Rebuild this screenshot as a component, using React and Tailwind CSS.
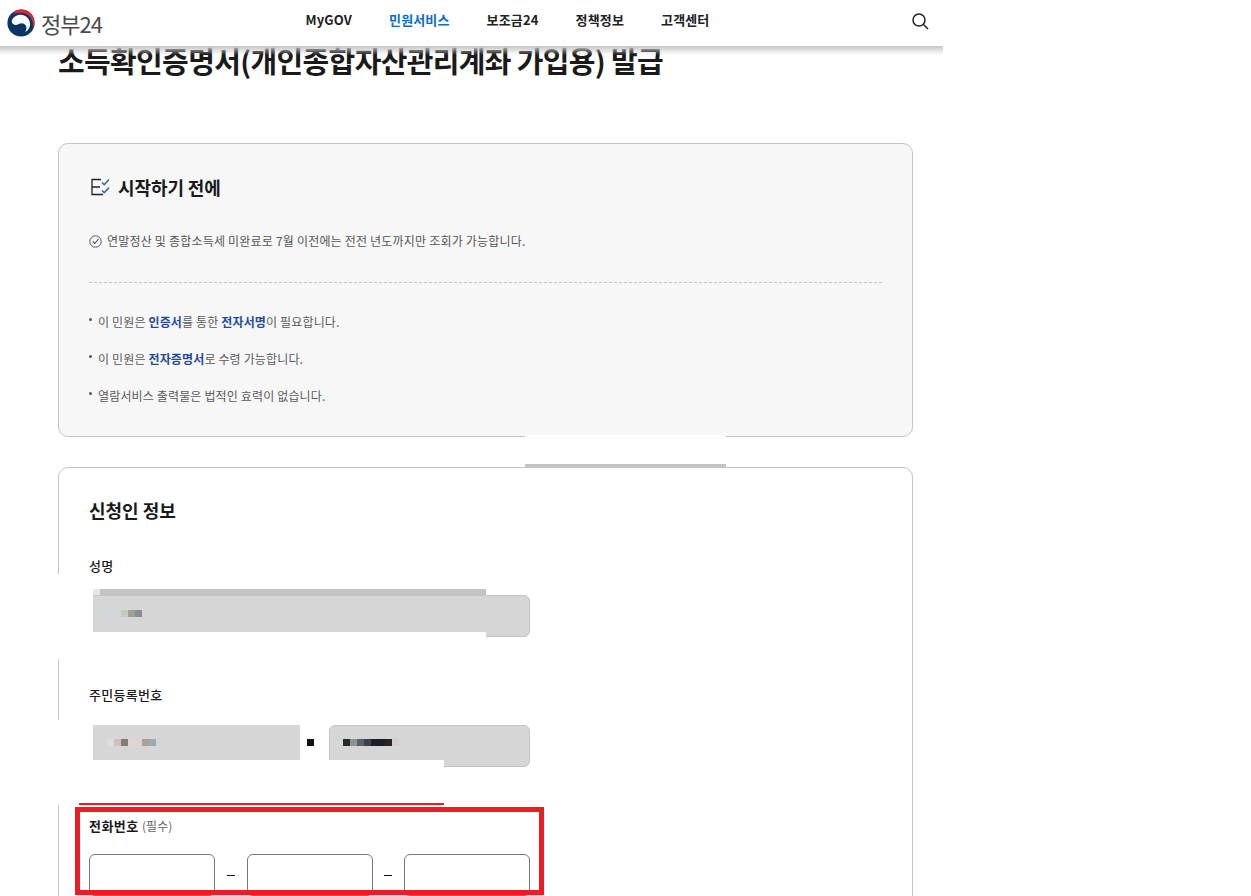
import React from "react";

const nameMosaic = ["bg-[#d3d8dc]", "bg-[#d2d8de]", "bg-[#d6d8d6]", "bg-[#c6c8c2]", "bg-[#a39d92]", "bg-[#87908f]"];
const idMosaic1 = ["bg-[#dcdde0]", "bg-[#d3bfc3]", "bg-[#7f7f78]", "bg-[#e0d5d0]", "bg-[#d9d6d0]", "bg-[#aba093]", "bg-[#9aabb4]", "bg-[#d2d7d8]"];
const idMosaic2 = ["bg-[#252b28]", "bg-[#918f95]", "bg-[#56636f]", "bg-[#38434c]", "bg-[#1c202a]", "bg-[#1c1f28]", "bg-[#2c2320]", "bg-[#d0d0d2]"];

function Logo() {
  return (
    <svg width="28" height="28" viewBox="0 0 28 28" fill="none">
      <circle cx="14" cy="14" r="13.6" fill="#0b3563" />
      <path d="M5 5C8 1.500 12 .2 16 .6c6 .6 11 5.400 11.400 11.600.2 3.300-.6 6-2 8.300.8-3 .9-6.200-.3-9C23.300 7 19 4 14.500 3.800 11 3.600 7.500 4.500 5 5z" fill="#cd2e3a" />
      <path d="M4.500 12.500C6 7.500 11 5 15.500 6c4.500 1 8 5 7.500 10-.4 3.500-2.500 6-5 7 1.500-2 2-4.500.8-6.500-1.500-2.500-4.800-3-7-1.500-2.200 1.300-5 1.200-6.300-.5-.6-.7-.7-1.300-.5-2z" fill="#ffffff" />
    </svg>
  );
}

function ChecklistIcon() {
  return (
    <svg width="21" height="20" viewBox="0 0 21 20" fill="none">
      <path d="M12 2.500H3v7.500h8M3 10v7.500h11" stroke="#222222" strokeWidth="1.300" />
      <path d="M13 5.500l2.200 2.200L20 2.500M13 13.500l2.200 2.200L20 10.500" stroke="#2b5fb0" strokeWidth="1.400" />
    </svg>
  );
}

function CheckCircle() {
  return (
    <svg width="13" height="13" viewBox="0 0 13 13" fill="none">
      <circle cx="6.500" cy="6.500" r="5.700" stroke="#555555" strokeWidth="1" />
      <path d="M3.800 6.500l2 2 3.700-4.500" stroke="#3f4f72" strokeWidth="1.100" />
    </svg>
  );
}

function SearchIcon() {
  return (
    <svg width="18" height="18" viewBox="0 0 18 18" fill="none">
      <circle cx="8" cy="8" r="6" stroke="#222222" strokeWidth="1.500" />
      <path d="M12.500 12.500L17 17" stroke="#222222" strokeWidth="1.500" />
    </svg>
  );
}

function Bullet({ children }) {
  return (
    <li className="flex items-start h-[17px] text-[12px] leading-[17px] tracking-[0.15px] text-[#5a5a5a]">
      <span className="mt-[5px] mr-[6px] w-[3px] h-[3px] rounded-full bg-[#555555]"></span>
      <span>{children}</span>
    </li>
  );
}

function Mosaic({ colors }) {
  return (
    <div className="flex">
      {colors.map((c, i) => (
        <div key={i} className={`w-[7px] h-[7px] ${c}`}></div>
      ))}
    </div>
  );
}

function PhoneInput() {
  return <input type="text" className="w-[126px] h-[42px] shrink-0 bg-white border border-[#767676] rounded-[6px]" />;
}

function Dash() {
  return <span className="w-[8px] h-px bg-[#111111] shrink-0"></span>;
}

export default function App() {
  return (
    <div className="relative w-[1251px] h-[896px] overflow-hidden bg-white font-['Noto_Sans_CJK_KR','Noto_Sans',sans-serif] text-[#1a1a1a]">
      <header className="absolute left-0 top-0 z-10 w-[943px] h-[46px] bg-white flex items-center">
        <div className="w-[270px] pl-[7px] flex items-center gap-[6px]">
          <Logo />
          <span className="text-[22px] leading-none text-[#4b4b4b] tracking-[-1px]">정부24</span>
        </div>
        <nav className="flex items-center gap-[37px] pl-[35.500px] -mt-[6px] text-[13px] font-bold tracking-[0.15px] text-[#222222]">
          <span>MyGOV</span>
          <span className="text-[#0b6bcb]">민원서비스</span>
          <span>보조금24</span>
          <span>정책정보</span>
          <span>고객센터</span>
        </nav>
        <div className="ml-auto mr-[14px] -mt-[4px]">
          <SearchIcon />
        </div>
      </header>
      <div className="absolute left-0 top-[46px] z-10 w-[943px] h-[9px] bg-gradient-to-b from-[#c6c6c6] to-transparent"></div>

      <main className="pl-[58px] w-[913px]">
        <h1 className="pt-[40px] h-[143px] text-[29px] leading-[40px] font-bold tracking-[-0.65px] text-[#1a1a1a]">
          소득확인증명서(개인종합자산관리계좌 가입용) 발급
        </h1>

        <section className="h-[294px] border border-[#c4c4c4] rounded-[10px] bg-[#f7f7f7] pt-[30px] px-[30px]">
          <div className="flex items-center gap-[8px] h-[26px]">
            <ChecklistIcon />
            <h2 className="text-[18px] font-bold tracking-[-0.1px]">시작하기 전에</h2>
          </div>
          <div className="flex items-center gap-[5px] mt-[32px] h-[18px] text-[12px] tracking-[0.2px] text-[#555555]">
            <CheckCircle />
            <span>연말정산 및 종합소득세 미완료로 7월 이전에는 전전 년도까지만 조회가 가능합니다.</span>
          </div>
          <div className="mt-[32px] border-t border-dashed border-[#c4c4c4]"></div>
          <ul className="mt-[30px] flex flex-col gap-[20px]">
            <Bullet>
              이 민원은 <b className="text-[#1f4a9c]">인증서</b>를 통한 <b className="text-[#1f4a9c]">전자서명</b>이 필요합니다.
            </Bullet>
            <Bullet>
              이 민원은 <b className="text-[#1f4a9c]">전자증명서</b>로 수령 가능합니다.
            </Bullet>
            <Bullet>열람서비스 출력물은 법적인 효력이 없습니다.</Bullet>
          </ul>
        </section>

        <section className="mt-[30px] h-[520px] border border-[#c4c4c4] rounded-[10px] bg-white pt-[29px] px-[30px]">
          <h2 className="h-[26px] text-[18px] leading-[26px] font-bold">신청인 정보</h2>

          <label className="block mt-[33px] h-[20px] text-[13px] leading-[20px] font-medium tracking-[0.3px]">성명</label>
          <div className="mt-[19px] w-[441px] h-[42px] bg-[#d6d6d6] border border-[#c4c4c4] rounded-[6px]"></div>

          <label className="block mt-[48px] h-[20px] text-[13px] leading-[20px] font-medium tracking-[0.3px]">주민등록번호</label>
          <div className="mt-[20px] w-[441px] flex items-center justify-between">
            <div className="w-[211px] h-[42px] bg-[#d6d6d6]"></div>
            <div className="w-[201px] h-[42px] bg-[#d6d6d6] border border-[#c4c4c4] rounded-[6px]"></div>
          </div>

          <label className="block mt-[49px] h-[20px] text-[13px] leading-[20px] font-bold tracking-[0.45px]">
            전화번호 <span className="font-normal text-[12px] tracking-normal text-[#666666]">(필수)</span>
          </label>
          <div className="mt-[18px] w-[441px] flex items-center justify-between">
            <PhoneInput />
            <Dash />
            <PhoneInput />
            <Dash />
            <PhoneInput />
          </div>
        </section>
      </main>

      {/* redaction patches and markup painted over the capture */}
      <div className="absolute left-[525px] top-[435px] w-[201px] h-[29px] bg-white"></div>
      <div className="absolute left-[525px] top-[464px] w-[201px] h-[3px] bg-[#c4c4c4]"></div>

      <div className="absolute left-[56px] top-[574px] w-[37px] h-[85px] bg-white"></div>
      <div className="absolute left-[93px] top-[589px] w-[7px] h-[6px] bg-[#e6e6e6]"></div>
      <div className="absolute left-[100px] top-[589px] w-[386px] h-[7px] bg-[#c4c4c4]"></div>
      <div className="absolute left-[93px] top-[632px] w-[393px] h-[6px] bg-white"></div>
      <div className="absolute left-[100px] top-[610px]">
        <Mosaic colors={nameMosaic} />
      </div>

      <div className="absolute left-[56px] top-[720px] w-[37px] h-[85px] bg-white"></div>
      <div className="absolute left-[93px] top-[760px] w-[351px] h-[8px] bg-white"></div>
      <div className="absolute left-[300px] top-[720px] w-[29px] h-[48px] bg-white"></div>
      <div className="absolute left-[307px] top-[739px] w-[7px] h-[7px] bg-[#111111]"></div>
      <div className="absolute left-[107px] top-[739px]">
        <Mosaic colors={idMosaic1} />
      </div>
      <div className="absolute left-[343px] top-[739px]">
        <Mosaic colors={idMosaic2} />
      </div>

      <div className="absolute left-[79px] top-[803px] w-[365px] h-[2px] bg-[#ed1c24]"></div>
      <div className="absolute left-[75px] top-[807px] w-[469px] h-[88px] border-[5px] border-[#ed1c24]"></div>
    </div>
  );
}
